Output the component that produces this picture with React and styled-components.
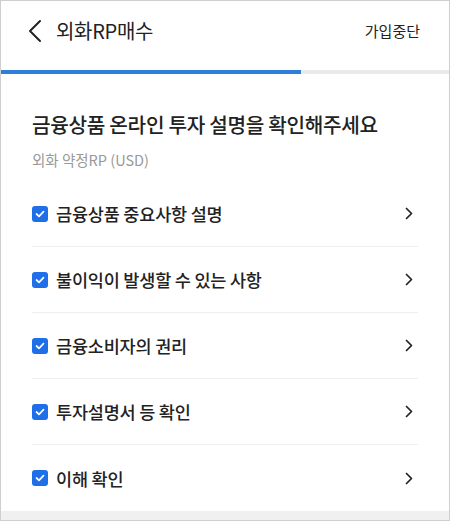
import styled, { createGlobalStyle } from "styled-components";

const GlobalStyle = createGlobalStyle`
  html, body {
    margin: 0;
    padding: 0;
    background: #fff;
  }
  body {
    font-family: "Noto Sans CJK KR", "Noto Sans", sans-serif;
    color: #222;
  }
`;

const Screen = styled.div`
  box-sizing: border-box;
  width: 450px;
  height: 521px;
  border: 1px solid #cfcfcf;
  display: flex;
  flex-direction: column;
  overflow: hidden;
  background: #fff;
`;

const Header = styled.header`
  height: 59px;
  display: flex;
  align-items: center;
  padding: 0 29px 0 27px;
  flex-shrink: 0;
`;

const BackButton = styled.button`
  border: 0;
  background: none;
  padding: 0;
  width: 18px;
  height: 24px;
  display: flex;
  align-items: center;
  margin-right: 10px;
  cursor: pointer;
`;

const Title = styled.h1`
  margin: 0;
  font-size: 20px;
  font-weight: 400;
  color: #222;
  flex: 1;
  letter-spacing: -0.3px;
`;

const StopLink = styled.span`
  font-size: 15px;
  color: #222;
`;

const Progress = styled.div`
  height: 4px;
  background: #e9e9e9;
  margin-top: 10px;
  flex-shrink: 0;
`;

const ProgressFill = styled.div`
  height: 100%;
  background: #2e7fd7;
`;

const Content = styled.main`
  flex: 1;
  min-height: 0;
  padding: 36px 31px 0 31px;
  display: flex;
  flex-direction: column;
`;

const Heading = styled.h2`
  margin: 0;
  font-size: 20.2px;
  font-weight: 500;
  color: #222;
  line-height: 30px;
  letter-spacing: -0.3px;
`;

const Sub = styled.p`
  margin: 10px 0 0;
  font-size: 14.5px;
  color: #999;
  line-height: 20px;
`;

const List = styled.ul`
  list-style: none;
  margin: 11px 0 0;
  padding: 0;
`;

const Row = styled.li`
  height: 66px;
  display: flex;
  align-items: center;
  border-bottom: ${(p) => (p.$last ? "0" : "1px solid #eeeeee")};
  box-sizing: border-box;
  padding-right: 5px;
`;

const Check = styled.span`
  width: 16px;
  height: 16px;
  border-radius: 3px;
  background: #1e6fe8;
  display: flex;
  align-items: center;
  justify-content: center;
  margin-right: 8px;
  flex-shrink: 0;
`;

const Label = styled.span`
  flex: 1;
  font-size: 17.5px;
  font-weight: 500;
  color: #222;
  letter-spacing: -0.2px;
`;

const Footer = styled.div`
  height: 9px;
  background: #f0f0f0;
  flex-shrink: 0;
`;

const items = [
  "금융상품 중요사항 설명",
  "불이익이 발생할 수 있는 사항",
  "금융소비자의 권리",
  "투자설명서 등 확인",
  "이해 확인",
];

function Chevron() {
  return (
    <svg width="8" height="13" viewBox="0 0 8 13" fill="none">
      <path d="M1.5 1.5L6.5 6.5L1.5 11.5" stroke="#222" strokeWidth="1.7" strokeLinecap="round" strokeLinejoin="round" />
    </svg>
  );
}

export default function App() {
  return (
    <>
      <GlobalStyle />
      <Screen>
        <Header>
          <BackButton aria-label="뒤로">
            <svg width="14" height="24" viewBox="0 0 14 24" fill="none">
              <path d="M12 2L2 12L12 22" stroke="#222" strokeWidth="2" strokeLinecap="round" strokeLinejoin="round" />
            </svg>
          </BackButton>
          <Title>외화RP매수</Title>
          <StopLink>가입중단</StopLink>
        </Header>
        <Progress>
          <ProgressFill style={{ width: `${(300 / 448) * 100}%` }} />
        </Progress>
        <Content>
          <Heading>금융상품 온라인 투자 설명을 확인해주세요</Heading>
          <Sub>외화 약정RP (USD)</Sub>
          <List>
            {items.map((t, i) => (
              <Row key={t} $last={i === items.length - 1}>
                <Check>
                  <svg width="10" height="8" viewBox="0 0 10 8" fill="none">
                    <path d="M1.5 4L4 6.3L8.5 1.7" stroke="#fff" strokeWidth="1.7" strokeLinecap="round" strokeLinejoin="round" />
                  </svg>
                </Check>
                <Label>{t}</Label>
                <Chevron />
              </Row>
            ))}
          </List>
        </Content>
        <Footer />
      </Screen>
    </>
  );
}
